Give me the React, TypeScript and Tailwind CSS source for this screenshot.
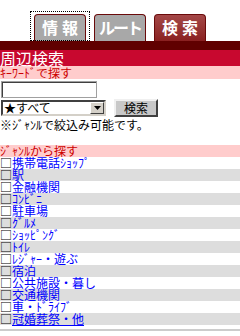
import React from "react";

const items = [
  "携帯電話ｼｮｯﾌﾟ",
  "駅",
  "金融機関",
  "ｺﾝﾋﾞﾆ",
  "駐車場",
  "ｸﾞﾙﾒ",
  "ｼｮｯﾋﾟﾝｸﾞ",
  "ﾄｲﾚ",
  "ﾚｼﾞｬｰ・遊ぶ",
  "宿泊",
  "公共施設・暮し",
  "交通機関",
  "車・ﾄﾞﾗｲﾌﾞ",
  "冠婚葬祭・他",
];

export default function App() {
  return (
    <div className="w-[240px] h-[336px] bg-white font-['Noto_Sans_CJK_JP',sans-serif] text-[12px] leading-[12px] text-black overflow-hidden">
      <div className="h-[41px] flex items-end pl-[34px] gap-[8px]">
        <div className="relative w-[52px] h-[27px] rounded-t-[4px] border border-b-0 border-[#6a0a0a] bg-[#a8a8a8] flex items-center justify-center pb-[2px] text-white font-bold text-[16px] leading-[16px] tracking-[4px] pl-[4px]">
          情報
          <span className="absolute left-[-5px] top-[-4px] w-[60px] h-[30px] border border-dotted border-black" />
        </div>
        <div className="w-[52px] h-[27px] rounded-t-[4px] border border-b-0 border-[#6a0a0a] bg-[#a8a8a8] flex items-center justify-center pb-[2px] text-white font-bold text-[16px] leading-[16px] tracking-[-2px]">
          ルート
        </div>
        <div className="w-[52px] h-[27px] rounded-t-[4px] border border-b-0 border-[#6a0a0a] bg-gradient-to-b from-[#a44848] to-[#8a2020] flex items-center justify-center pb-[2px] text-white font-bold text-[16px] leading-[16px] tracking-[4px] pl-[4px]">
          検索
        </div>
      </div>
      <div className="h-[9px] bg-[#600000]" />
      <div className="h-[16px] bg-[#c8082f] text-white text-[16px] leading-[16px]">周辺検索</div>
      <div className="h-[13px] bg-[#ffcccc] text-[#cc0000] leading-[13px]">ｷｰﾜｰﾄﾞで探す</div>
      <div className="pl-[1px] pt-[2px]">
        <div className="w-[96px] h-[17px] bg-white border border-[#a0a0a0] shadow-[inset_1px_1px_0_#404040]" />
      </div>
      <div className="flex items-center pl-[1px] pt-[1px] gap-[8px]">
        <div className="w-[105px] h-[16px] bg-white border-2 border-t-[#404040] border-l-[#404040] border-b-[#d4d0c8] border-r-[#d4d0c8] flex items-center justify-between">
          <span className="pl-[1px] text-[12px] leading-[12px]">★すべて</span>
          <span className="w-[14px] h-[12px] bg-[#d4d0c8] border border-t-white border-l-white border-b-[#404040] border-r-[#404040] flex items-center justify-center">
            <svg width="7" height="4" viewBox="0 0 7 4"><path d="M0 0h7L3.5 4z" fill="#000" /></svg>
          </span>
        </div>
        <div className="w-[44px] h-[18px] bg-[#c8c8c8] border-2 border-t-[#f0f0f0] border-l-[#f0f0f0] border-b-[#404040] border-r-[#404040] flex items-center justify-center text-[12px] leading-[12px]">
          検索
        </div>
      </div>
      <div className="h-[13px] leading-[13px] pt-[1px]">※ｼﾞｬﾝﾙで絞込み可能です。</div>
      <div className="h-[15px]" />
      <div className="h-[12px] bg-[#ffcccc] text-[#cc0000] leading-[12px]">ｼﾞｬﾝﾙから探す</div>
      <div className="flex flex-col">
        {items.map((t, i) => (
          <div key={t} className={`h-[12px] leading-[12px] flex items-center ${i % 2 === 1 ? "bg-[#dddddd]" : "bg-white"}`}>
            <span>□</span>
            <a href="#" className="text-[#0000ff] underline">{t}</a>
          </div>
        ))}
      </div>
      <div className="mt-[4px] h-[2px] bg-[#cccccc]" />
    </div>
  );
}
